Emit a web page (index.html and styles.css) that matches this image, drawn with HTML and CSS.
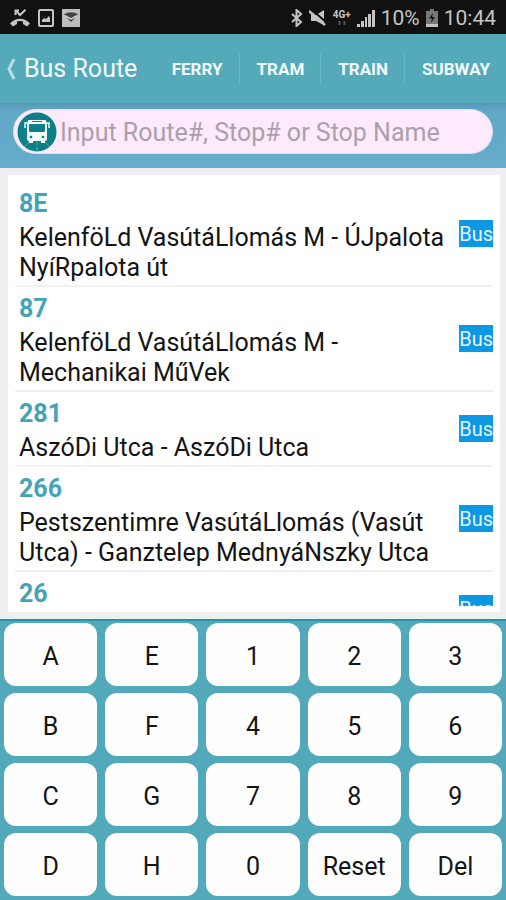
FILE: index.html
```html
<!DOCTYPE html>
<html lang="en">
<head>
<meta charset="utf-8">
<meta name="viewport" content="width=device-width, initial-scale=1">
<title>Bus Route</title>
<link rel="stylesheet" href="styles.css">
</head>
<body>
<div class="status">
  <div class="status-group">
    <svg width="20" height="18" viewBox="0 0 20 18"><path d="M0 14.500c5-6.500 15-6.500 20 0L17 17.500l-4-2.500v-2.500a9 9 0 0 0-6 0V15l-4 2.500z" fill="#c4c4c4"/><path d="M5.500 6V1.500H9M6 2l4 4L15.500 .8" fill="none" stroke="#c4c4c4" stroke-width="2"/></svg>
    <svg width="16" height="18" viewBox="0 0 16 18"><rect x="1" y="1" width="14" height="16" rx="1" fill="none" stroke="#c4c4c4" stroke-width="2"/><path d="M4 13v-2l2-2 2 1 3-3 1 2v4z" fill="#c4c4c4"/></svg>
    <svg width="18" height="18" viewBox="0 0 18 18"><path d="M0 0h18v18H0z" fill="#bdbdbd"/><path d="M2 5.500c4-3 10-3 14 0L9 13z" fill="#444"/><path d="M2.500 6.500L9 10l6.500-3.500" fill="none" stroke="#ccc" stroke-width="1.500"/></svg>
  </div>
  <div class="status-group status-right">
    <svg width="12" height="18" viewBox="0 0 12 18"><path d="M1 5l9 8-4.500 4V1L10 5l-9 8" fill="none" stroke="#c4c4c4" stroke-width="2"/></svg>
    <svg width="18" height="18" viewBox="0 0 18 18"><path d="M2 6h5l8-5v15l-8-4H2z" fill="#c4c4c4"/><path d="M2 0l15 13" stroke="#111" stroke-width="2"/><path d="M0 2l16 14" stroke="#c4c4c4" stroke-width="2.500"/></svg>
    <div class="network"><span>4G+</span><svg width="10" height="5" viewBox="0 0 10 5"><path d="M2.500 0v4M7.500 0v4" stroke="#555" stroke-width="2"/></svg></div>
    <svg width="18" height="17" viewBox="0 0 18 17"><path d="M0 14h3v3H0zM4 11h3v6H4zM8 7h2v10H8zM11 4h3v13h-3zM15 0h3v17h-3z" fill="#c4c4c4"/></svg>
    <span class="status-text">10%</span>
    <svg width="12" height="18" viewBox="0 0 12 18"><path d="M4 0h4v2h4v16H0V2h4z" fill="#777"/><path d="M0 15h12v3H0z" fill="#c4c4c4"/><path d="M7 4L3 9.500h3L5 14l4-6H6z" fill="#111"/></svg>
    <span class="status-text">10:44</span>
  </div>
</div>
<header class="bar">
  <a class="back" href="#">
    <svg width="10" height="22" viewBox="0 0 10 22"><path d="M8 1L3 11l5 10" fill="none" stroke="#b4dde5" stroke-width="3"/></svg>
    <h1>Bus Route</h1>
  </a>
  <nav class="tabs">
    <a href="#">FERRY</a>
    <a href="#">TRAM</a>
    <a href="#">TRAIN</a>
    <a href="#">SUBWAY</a>
  </nav>
</header>
<form class="search">
  <label class="search-box">
    <svg width="40" height="42" viewBox="0 0 40 42"><circle cx="20" cy="21" r="19.500" fill="#0d7f89"/><path d="M12 31L7 36M28 31l5 5M20 31v3M20 36v4" stroke="#5fa9b0" stroke-width="1"/><rect x="10" y="10" width="20" height="20" rx="2" fill="#f4f9fa"/><rect x="11" y="9" width="18" height="3" rx="1" fill="#f4f9fa"/><rect x="15" y="10" width="10" height="1" fill="#0d7f89"/><rect x="12" y="13" width="16" height="8" rx="1" fill="#0d7f89"/><path d="M12 29h4v3h-4zM24 29h4v3h-4z" fill="#f4f9fa"/><path d="M10 12H8v5M30 12h2v5" fill="none" stroke="#f4f9fa" stroke-width="1.500"/><circle cx="14" cy="26" r="1.300" fill="#0d7f89"/><circle cx="26" cy="26" r="1.300" fill="#0d7f89"/></svg>
    <input type="text" aria-label="Route or stop" placeholder="Input Route#, Stop# or Stop Name">
  </label>
</form>
<main class="results">
  <ul class="card">
    <li class="route"><div class="info"><h2>8E</h2><p>KelenföLd VasútáLlomás M - ÚJpalota NyíRpalota út</p></div><span class="badge">Bus</span></li>
    <li class="route"><div class="info"><h2>87</h2><p>KelenföLd VasútáLlomás M - Mechanikai MűVek</p></div><span class="badge">Bus</span></li>
    <li class="route"><div class="info"><h2>281</h2><p>AszóDi Utca - AszóDi Utca</p></div><span class="badge">Bus</span></li>
    <li class="route"><div class="info"><h2>266</h2><p>Pestszentimre VasútáLlomás (Vasút Utca) - Ganztelep MednyáNszky Utca</p></div><span class="badge">Bus</span></li>
    <li class="route"><div class="info"><h2>26</h2></div><span class="badge">Bus</span></li>
  </ul>
</main>
<div class="keypad">
  <button type="button">A</button><button type="button">E</button><button type="button">1</button><button type="button">2</button><button type="button">3</button>
  <button type="button">B</button><button type="button">F</button><button type="button">4</button><button type="button">5</button><button type="button">6</button>
  <button type="button">C</button><button type="button">G</button><button type="button">7</button><button type="button">8</button><button type="button">9</button>
  <button type="button">D</button><button type="button">H</button><button type="button">0</button><button type="button">Reset</button><button type="button">Del</button>
</div>
</body>
</html>
```
FILE: styles.css
```css
* { box-sizing: border-box; }
html { height: 100%; }
body {
  margin: 0;
  height: 100%;
  display: flex;
  flex-direction: column;
  font-family: Roboto, "Liberation Sans", sans-serif;
  color: #141414;
  background: #efefef;
}
h1, h2, p, ul { margin: 0; padding: 0; }
svg { display: block; flex: none; }
a { color: inherit; text-decoration: none; }

.status {
  flex: none;
  display: flex;
  justify-content: space-between;
  height: 34px;
  padding: 2px 10px 0;
  background: #111;
  color: #c4c4c4;
}
.status-group { display: flex; align-items: center; gap: 8px; }
.status-right { gap: 6px; }
.status-text { font-size: 21px; line-height: 24px; }
.network {
  display: flex;
  flex-direction: column;
  align-items: center;
  gap: 1px;
  font-size: 10px;
  font-weight: 700;
  line-height: 10px;
}

.bar {
  flex: none;
  display: flex;
  align-items: center;
  justify-content: space-between;
  height: 69px;
  padding-left: 6px;
  background: #55aaba;
  color: #f4fbfc;
}
.back { display: flex; align-items: center; gap: 8px; }
.back h1 { font-size: 25px; line-height: 32px; font-weight: 400; }
.tabs { display: flex; }
.tabs a {
  padding: 0 16px 0 17px;
  font-size: 17px;
  line-height: 32px;
  font-weight: 700;
}
.tabs a + a { border-left: 1px solid #66b5c4; }

.search {
  flex: none;
  padding: 6px 13px 14px;
  background: linear-gradient(#5797b2, #60a8c7 8px, #66adcb);
}
.search-box {
  display: flex;
  align-items: center;
  gap: 3px;
  height: 45px;
  padding-left: 3px;
  border: 1px solid #d9e3f2;
  border-radius: 23px;
  background: #fdeafd;
}
.search-box input {
  flex: 1;
  min-width: 0;
  padding: 2px 0 0;
  border: 0;
  outline: 0;
  background: transparent;
  font: 25px/32px Roboto, "Liberation Sans", sans-serif;
}
.search-box input::placeholder { color: #aaa0aa; opacity: 1; }

.results {
  flex: 1;
  min-height: 0;
  display: flex;
  padding: 7px 6px 7px 8px;
}
.card {
  flex: 1;
  overflow: hidden;
  border: solid #fff;
  border-width: 7px 7px 6px;
  background: #fff;
  list-style: none;
}
.route {
  display: flex;
  align-items: center;
  justify-content: space-between;
  min-height: 75px;
  border-bottom: 2px solid #f0f0f0;
}
.info { align-self: flex-start; padding: 6px 4px 2px; }
.info h2 {
  margin-bottom: 3px;
  color: #44a3b5;
  font-size: 25px;
  line-height: 32px;
  font-weight: 700;
}
.info p { font-size: 25px; line-height: 30px; }
.badge {
  flex: none;
  padding: 1px 0 0;
  background: #0c98e2;
  color: #e4f4fd;
  font-size: 20px;
  line-height: 26px;
}

.keypad {
  flex: none;
  display: grid;
  grid-template-columns: repeat(5, 1fr);
  grid-auto-rows: 63px;
  gap: 7px 8px;
  padding: 2px 4px 4px;
  border-top: 2px solid #2494a8;
  background: #52a9b9;
}
.keypad button {
  padding: 4px 0 0;
  border: 0;
  border-radius: 12px;
  background: #fefefe;
  color: #141414;
  font: 25px/30px Roboto, "Liberation Sans", sans-serif;
}
```
